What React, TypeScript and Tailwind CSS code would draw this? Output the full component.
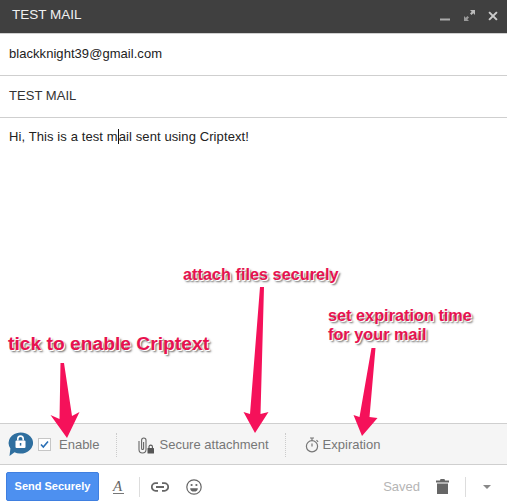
const font = 'font-["Liberation_Sans",Arial,sans-serif]';
const note =
  'absolute font-bold leading-[19px] text-[#e8124f] whitespace-nowrap [text-shadow:1px_1px_0_#fff,2px_2px_2px_#666]';

function Annotations() {
  return (
    <>
      <div className={`${note} left-[8px] top-[334px] text-[19.25px]`}>tick to enable Criptext</div>
      <div className={`${note} left-[183px] top-[265px] text-[16.3px]`}>attach files securely</div>
      <div className={`${note} left-[328px] top-[306px] text-[16.3px]`}>
        set expiration time
        <br />
        for your mail
      </div>
      <svg className="absolute left-0 top-0 pointer-events-none" width="507" height="501">
        <g fill="#f5115a">
          <path d="M60.5 363 L64 363 L72 416 L79.5 412 L67 438 L50.5 415 L59.5 419 Z" />
          <path d="M260 287 L264 287 L260.5 414 L268.5 412 L255 433 L243.5 412 L250 414 Z" />
          <path d="M371.5 348 L375.5 348 L369.5 417 L377.5 418 L362 436 L353.5 415 L359.5 417 Z" />
        </g>
      </svg>
    </>
  );
}

function LockBubble() {
  return (
    <svg width="26" height="25" viewBox="0 0 26 25">
      <path d="M13.5 .5a12.5 10.5 0 1 1-6 19.7 L2.5 24 L3.4 16.5A12.5 10.5 0 0 1 13.5 .5Z" fill="#2f6f9f" />
      <rect x="8.5" y="8.5" width="10" height="7.5" rx="1" fill="#fff" />
      <path d="M10.8 8.5V6.8a2.7 2.7 0 0 1 5.4 0v1.7" fill="none" stroke="#fff" strokeWidth="1.6" />
      <rect x="12.8" y="11" width="1.5" height="2.6" fill="#2f6f9f" />
    </svg>
  );
}

function ClipLock() {
  return (
    <svg width="16" height="17" viewBox="0 0 16 17" fill="none">
      <path
        d="M1 4V12.5a3.5 3.5 0 0 0 7 0V3.2a2.2 2.2 0 0 0-4.4 0V11.5a1 1 0 0 0 2 0V5"
        stroke="#666"
        strokeWidth="1.1"
      />
      <rect x="9.5" y="11" width="6.5" height="5.5" rx=".5" fill="#555" />
      <path d="M11 11V9.8a1.7 1.7 0 0 1 3.4 0V11" stroke="#555" strokeWidth="1.1" />
    </svg>
  );
}

function StopwatchIcon() {
  return (
    <svg width="15" height="16" viewBox="0 0 15 16" fill="none" stroke="#777" strokeWidth="1.2">
      <circle cx="7" cy="9.3" r="5.6" />
      <path d="M5 1h4M7 1v2.5M11.5 3.2l1.6 1.6M7 6.5v3" />
    </svg>
  );
}

function LinkIcon() {
  return (
    <svg className="ml-[11px]" width="18" height="10" viewBox="0 0 18 10" fill="none" stroke="#666" strokeWidth="1.8">
      <path d="M7 1.2H4.6a3.8 3.8 0 0 0 0 7.6H7M11 1.2h2.4a3.8 3.8 0 0 1 0 7.6H11M5 5h8" />
    </svg>
  );
}

function SmileIcon() {
  return (
    <svg className="ml-[17px]" width="16" height="16" viewBox="0 0 16 16">
      <circle cx="8" cy="8" r="7.2" fill="none" stroke="#666" strokeWidth="1.2" />
      <circle cx="5.6" cy="6" r="1.1" fill="#666" />
      <circle cx="10.4" cy="6" r="1.1" fill="#666" />
      <path d="M4.2 9.2h7.6a3.8 3.4 0 0 1-7.6 0Z" fill="#666" />
    </svg>
  );
}

export default function App() {
  return (
    <div className={`${font} relative w-[507px] h-[501px] bg-white flex flex-col overflow-hidden`}>
      {/* Title bar */}
      <div className="h-[34px] shrink-0 bg-[#404040] border-b border-[#d0d0d0] flex items-center justify-between pl-3 pr-[9px]">
        <span className="text-[13.5px] text-[#f0f0f0] mt-[-3px]">TEST MAIL</span>
        <div className="flex items-center gap-[14px] mb-[2px]">
          <svg width="10" height="12" viewBox="0 0 10 12">
            <rect x="0" y="8.5" width="10" height="2" fill="#aaa" />
          </svg>
          <svg width="11" height="11" viewBox="0 0 11 11" fill="#bbb">
            <path d="M6 0h5v5L9.3 3.3 7.5 5 6 3.5 7.7 1.7Z" />
            <path d="M5 11H0V6l1.7 1.7L3.5 6 5 7.5 3.3 9.3Z" fill="#999" />
          </svg>
          <svg className="ml-[-1px]" width="10" height="10" viewBox="0 0 11 11">
            <path d="M1.2 1.2l8.6 8.6M9.8 1.2l-8.6 8.6" stroke="#ccc" strokeWidth="2.2" />
          </svg>
        </div>
      </div>

      {/* Fields */}
      <div className="h-[42px] shrink-0 border-b border-[#cfcfcf] pl-[9px] flex items-center text-[13px] tracking-[0.05px] text-[#222]">
        <span className="mt-[-2px]">blackknight39@gmail.com</span>
      </div>
      <div className="h-[42px] shrink-0 border-b border-[#cfcfcf] pl-[9px] flex items-center text-[13px] tracking-[0.05px] text-[#333]">
        <span className="mt-[-2px]">TEST MAIL</span>
      </div>

      {/* Message body */}
      <div className="flex-1 pl-[9px] pt-[10px] text-[13px] leading-[18px] tracking-[0.1px] text-[#222]">
        Hi, This is a test m
        <span className="inline-block w-px h-[15px] bg-[#111] align-[-3px]" />
        ail sent using Criptext!
      </div>

      {/* Criptext bar */}
      <div className="h-[42px] shrink-0 bg-[#f5f5f5] border-t border-b border-[#cfcfcf] flex items-center text-[13px] text-[#777] pt-[2px]">
        <div className="ml-[7px] mr-[5px] flex mt-[-2px]">
          <LockBubble />
        </div>
        <span className="w-[13px] h-[13px] border border-[#c6c6c6] bg-white flex items-center justify-center mt-[-2px]">
          <svg width="9" height="9" viewBox="0 0 9 9" fill="none">
            <path d="M1 4.5l2.3 2.5L8 1.5" stroke="#2a6fb5" strokeWidth="1.6" />
          </svg>
        </span>
        <span className="ml-[8px]">Enable</span>
        <div className="ml-[17px] h-[24px] border-l border-dotted border-[#ccc]" />
        <div className="ml-[21px] flex items-center gap-[5px]">
          <ClipLock />
          <span>Secure attachment</span>
        </div>
        <div className="ml-[16px] h-[24px] border-l border-dotted border-[#ccc]" />
        <div className="ml-[19px] flex items-center gap-[3px]">
          <StopwatchIcon />
          <span>Expiration</span>
        </div>
      </div>

      {/* Send toolbar */}
      <div className="h-[36px] shrink-0 bg-white flex items-center pt-[7px]">
        <button className="ml-[6px] w-[93px] h-[29px] bg-[#4d90f0] border border-[#3f7fe0] rounded-[2px] text-white text-[11px] font-bold">
          Send Securely
        </button>
        <span className="ml-[14px] w-[11px] text-[15px] leading-[14px] font-['Liberation_Serif',serif] italic text-[#666] border-b border-[#777]">
          A
        </span>
        <div className="ml-[15px] h-[20px] border-l border-[#ddd]" />
        <LinkIcon />
        <SmileIcon />
        <span className="ml-auto text-[13px] text-[#b5b5b5]">Saved</span>
        <svg className="ml-[16px]" width="13" height="15" viewBox="0 0 13 15" fill="#666">
          <path d="M4.5 0h4l.5 1.5h4V3.5H0V1.5h4ZM1 4.5h11V15H1Z" />
        </svg>
        <div className="ml-[16px] h-[20px] border-l border-[#ddd]" />
        <span className="ml-[17px] mr-[16px] w-0 h-0 border-x-[4px] border-x-transparent border-t-[4px] border-t-[#888]" />
      </div>

      <Annotations />
    </div>
  );
}
